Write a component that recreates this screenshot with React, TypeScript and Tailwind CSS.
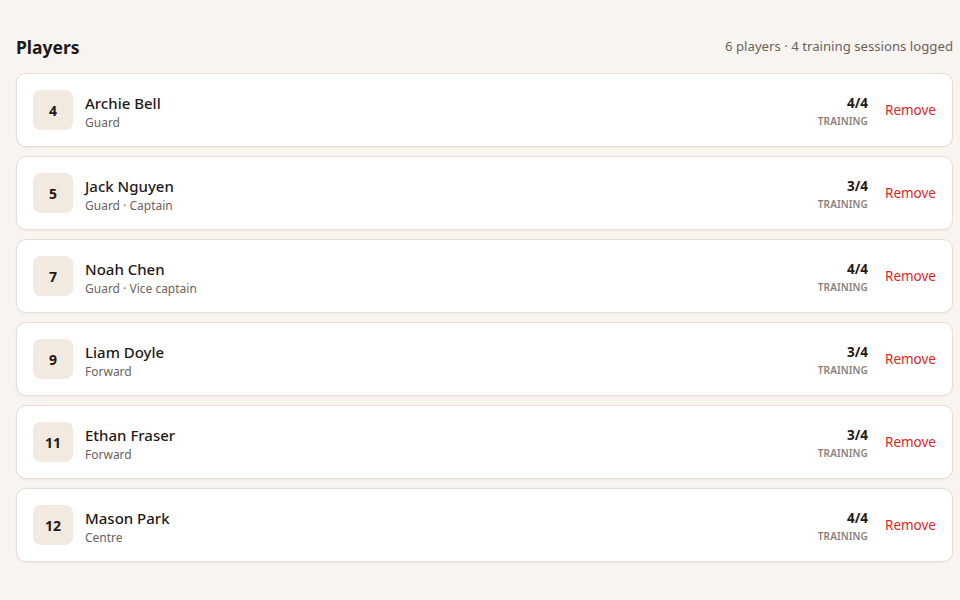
import React from "react";

type Player = { num: number; name: string; role: string; attended: number };

const players: Player[] = [
  { num: 4, name: "Archie Bell", role: "Guard", attended: 4 },
  { num: 5, name: "Jack Nguyen", role: "Guard · Captain", attended: 3 },
  { num: 7, name: "Noah Chen", role: "Guard · Vice captain", attended: 4 },
  { num: 9, name: "Liam Doyle", role: "Forward", attended: 3 },
  { num: 11, name: "Ethan Fraser", role: "Forward", attended: 3 },
  { num: 12, name: "Mason Park", role: "Centre", attended: 4 },
];

export default function App() {
  return (
    <div
      className="min-h-[600px] w-full bg-[#f8f5f1] pl-4 pr-[7px] pt-[35px] text-[#1f1a17]"
      style={{ fontFamily: '"Noto Sans", "Open Sans", sans-serif' }}
    >
      <div className="mb-[14px] flex items-center justify-between">
        <h2 className="text-[17.5px] font-bold leading-6">Players</h2>
        <span className="text-[13.2px] text-[#6b625c]">
          6 players · 4 training sessions logged
        </span>
      </div>
      <ul className="flex flex-col gap-[9px]">
        {players.map((p) => (
          <li
            key={p.num}
            className="flex h-[74px] items-center rounded-[10px] border border-[#e6ddd4] bg-white px-4 shadow-[0_1px_2px_rgba(0,0,0,0.04)]"
          >
            <div className="flex h-10 w-10 items-center justify-center rounded-lg bg-[#f2e9e1] text-[14px] font-bold">
              {p.num}
            </div>
            <div className="ml-3 flex flex-col pt-[4px]">
              <span className="text-[15px] font-medium leading-[22px]">{p.name}</span>
              <span className="text-[12px] leading-[18px] text-[#6b625c]">{p.role}</span>
            </div>
            <div className="ml-auto flex flex-col items-end pt-[2px]">
              <span className="text-[13.5px] font-bold leading-[18px]">{p.attended}/4</span>
              <span className="mt-[2px] text-[10px] font-semibold uppercase leading-[14px] tracking-[0.01em] text-[#8a817a]">
                Training
              </span>
            </div>
            <button className="ml-[17px] text-[13.5px] text-[#dc2626]">Remove</button>
          </li>
        ))}
      </ul>
    </div>
  );
}
